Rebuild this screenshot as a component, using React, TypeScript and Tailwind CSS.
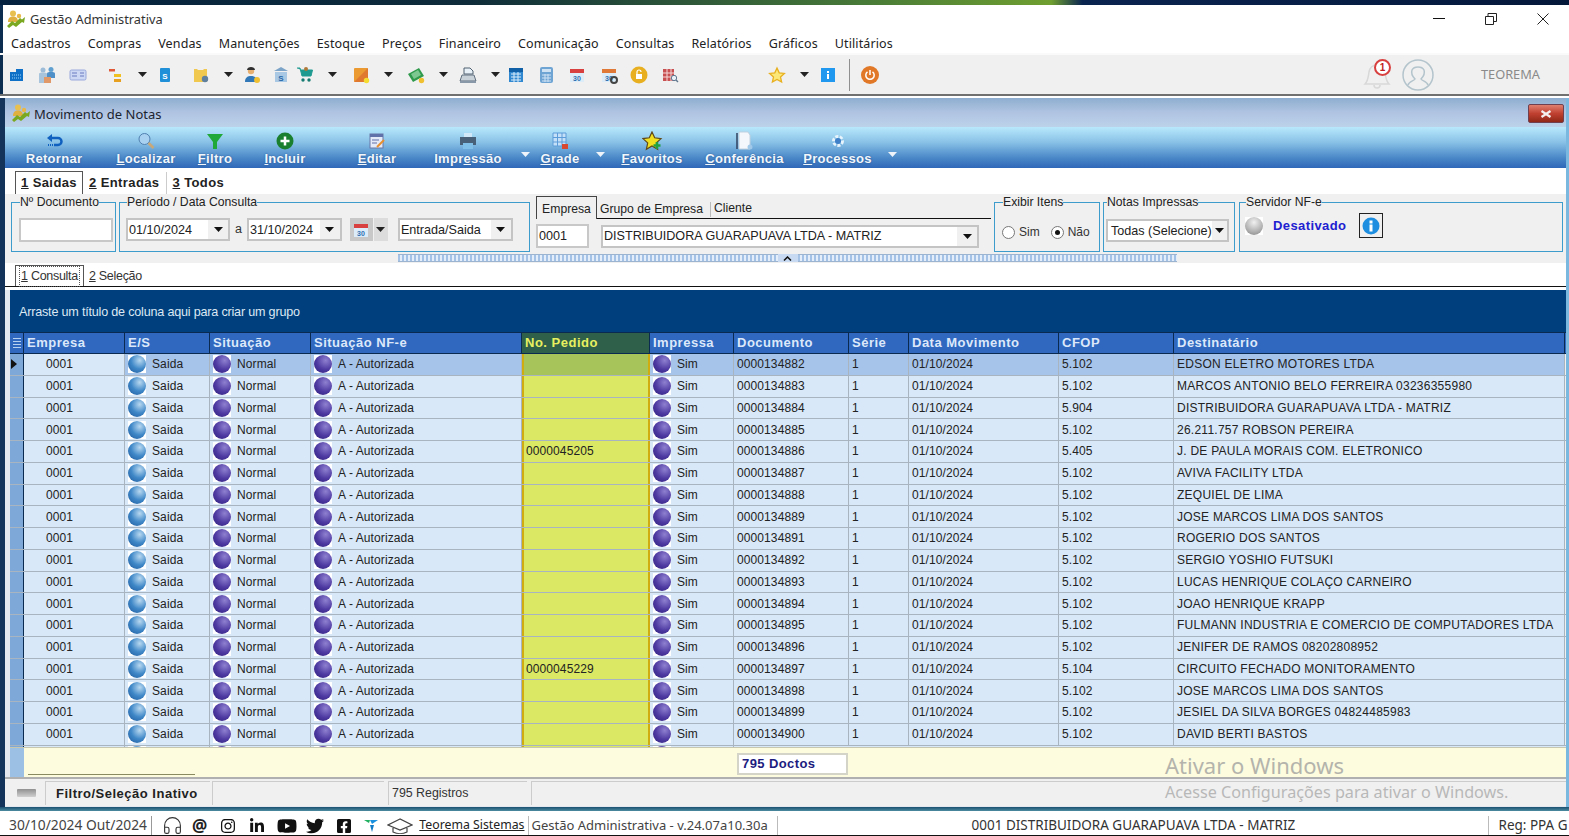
import type { ReactNode } from "react";
import { FaFacebookSquare, FaInstagram, FaLinkedinIn, FaTwitter, FaYoutube } from "react-icons/fa";
import { Headphones } from "lucide-react";

const menus = ["Cadastros", "Compras", "Vendas", "Manutenções", "Estoque", "Preços", "Financeiro", "Comunicação", "Consultas", "Relatórios", "Gráficos", "Utilitários"];

const columns = [
  { title: "Empresa", w: "w-[101px]" },
  { title: "E/S", w: "w-[85px]" },
  { title: "Situação", w: "w-[101px]" },
  { title: "Situação NF-e", w: "w-[211px]" },
  { title: "No. Pedido", w: "w-[128px]" },
  { title: "Impressa", w: "w-[84px]" },
  { title: "Documento", w: "w-[115px]" },
  { title: "Série", w: "w-[60px]" },
  { title: "Data Movimento", w: "w-[150px]" },
  { title: "CFOP", w: "w-[115px]" },
  { title: "Destinatário", w: "w-[391px]" },
];

const rows = [
  ["", "0000134882", "5.102", "EDSON ELETRO MOTORES LTDA"],
  ["", "0000134883", "5.102", "MARCOS ANTONIO BELO FERREIRA 03236355980"],
  ["", "0000134884", "5.904", "DISTRIBUIDORA GUARAPUAVA LTDA - MATRIZ"],
  ["", "0000134885", "5.102", "26.211.757 ROBSON PEREIRA"],
  ["0000045205", "0000134886", "5.405", "J. DE PAULA MORAIS COM. ELETRONICO"],
  ["", "0000134887", "5.102", "AVIVA FACILITY LTDA"],
  ["", "0000134888", "5.102", "ZEQUIEL DE LIMA"],
  ["", "0000134889", "5.102", "JOSE MARCOS LIMA DOS SANTOS"],
  ["", "0000134891", "5.102", "ROGERIO DOS SANTOS"],
  ["", "0000134892", "5.102", "SERGIO YOSHIO FUTSUKI"],
  ["", "0000134893", "5.102", "LUCAS HENRIQUE COLAÇO CARNEIRO"],
  ["", "0000134894", "5.102", "JOAO HENRIQUE KRAPP"],
  ["", "0000134895", "5.102", "FULMANN INDUSTRIA E COMERCIO DE COMPUTADORES LTDA"],
  ["", "0000134896", "5.102", "JENIFER DE RAMOS 08202808952"],
  ["0000045229", "0000134897", "5.104", "CIRCUITO FECHADO MONITORAMENTO"],
  ["", "0000134898", "5.102", "JOSE MARCOS LIMA DOS SANTOS"],
  ["", "0000134899", "5.102", "JESIEL DA SILVA BORGES 04824485983"],
  ["", "0000134900", "5.102", "DAVID BERTI BASTOS"],
];

function AppIcon() {
  return (
    <svg width="20" height="18" viewBox="0 0 20 18">
      <circle cx="7" cy="3.500" r="3" fill="#e8c050" />
      <path d="M2 12c0-4 2-5.500 5-5.500s5 1.500 5 5.500z" fill="#e0b040" />
      <circle cx="13" cy="6" r="2.200" fill="#e8b848" />
      <path d="M1 16l5-5 3 2 5-5 2 1.500 3-2.500-1 6-2-1-6 5-3-2-4 3z" fill="#7aa820" />
    </svg>
  );
}

function Caret({ color = "#222" }: { color?: string }) {
  return (
    <svg width="9" height="5" viewBox="0 0 9 5">
      <path d="M0 0h9L4.500 5z" fill={color} />
    </svg>
  );
}

function Ico({ children }: { children: ReactNode }) {
  return (
    <svg width="18" height="18" viewBox="0 0 18 18">
      {children}
    </svg>
  );
}

const Cal = ({ top = "#d84040", gear = false }: { top?: string; gear?: boolean }) => (
  <Ico>
    <rect x="2" y="3" width="14" height="13" fill="#dcecf8" />
    <rect x="2" y="3" width="14" height="4" fill={top} />
    <text x="9" y="14.500" fontSize="7" fontWeight="700" textAnchor="middle" fill="#3070b0" fontFamily="Liberation Sans">30</text>
    {gear && <circle cx="14" cy="14" r="3" fill="none" stroke="#444" strokeWidth="2" />}
  </Ico>
);

const toolIcons: { w: string; icon: ReactNode; caret?: boolean }[] = [
  { w: "w-[30px]", icon: <Ico><path d="M2 6h6V3h7v12H2z" fill="#0f70c8" /><path d="M4 9h10M4 12h10" stroke="#9cd0f4" strokeWidth="1" strokeDasharray="1 1" /></Ico> },
  { w: "w-[31px]", icon: <Ico><circle cx="5" cy="4" r="2.500" fill="#9cbcd8" /><circle cx="13" cy="3.500" r="2.500" fill="#60a0d0" /><path d="M1 17V8c0-1 1-1.500 4-1.500S9 7 9 8v9z" fill="#a8c4dc" /><path d="M9 12V7.500c0-1 1-1.500 4-1.500s4 .5 4 1.500V12z" fill="#5090c8" /><rect x="6" y="11" width="7" height="6" fill="#e09868" /></Ico> },
  { w: "w-[37px]", icon: <Ico><rect x="1" y="4" width="16" height="10" rx="1.500" fill="#ccd8f4" stroke="#98a8dc" /><path d="M3 7h5M3 10h5M11 7h4M11 10h4" stroke="#6878c0" /></Ico> },
  { w: "w-[50px]", caret: true, icon: <Ico><path d="M3 3h6v2.500H3z" fill="#e05838" /><path d="M8 8h7v3H8z" fill="#f0c020" /><path d="M8 13h7v3H8z" fill="#e8a020" /></Ico> },
  { w: "w-[36px]", icon: <Ico><rect x="4" y="2" width="10" height="14" rx="1" fill="#2090d8" /><text x="9" y="12.500" fontSize="8" fontWeight="700" textAnchor="middle" fill="#fff" fontFamily="Liberation Sans">S</text></Ico> },
  { w: "w-[51px]", caret: true, icon: <Ico><path d="M2 3h3l1 1h5l1-1h3v13H2z" fill="#f0c850" /><circle cx="13" cy="13" r="3.200" fill="#6080a0" /></Ico> },
  { w: "w-[29px]", icon: <Ico><circle cx="8" cy="5" r="3.200" fill="#e8b070" /><path d="M4 4c0-4 8-4 8 0z" fill="#303030" /><path d="M2 16c0-5 3-6 6-6s6 1 6 6z" fill="#3078b8" /><circle cx="14" cy="14" r="3" fill="#f0c030" /></Ico> },
  { w: "w-[24px]", icon: <Ico><path d="M9 1l7 4H2z" fill="#7ca4c8" /><rect x="3" y="6" width="12" height="10" fill="#a8c8e4" /><text x="9" y="14.500" fontSize="8" fontWeight="700" textAnchor="middle" fill="#2868a8" fontFamily="Liberation Sans">S</text></Ico> },
  { w: "w-[56px]", caret: true, icon: <Ico><path d="M1 2h3l2 8h9l1.500-6H5" fill="#1f9a90" stroke="#1f9a90" /><circle cx="7" cy="14" r="1.700" fill="#167a72" /><circle cx="13" cy="14" r="1.700" fill="#167a72" /><circle cx="10" cy="3" r="2" fill="#b07838" /></Ico> },
  { w: "w-[55px]", caret: true, icon: <Ico><rect x="2" y="2" width="14" height="14" rx="1" fill="#ea9a30" /><path d="M2 16L16 2v14z" fill="#e07830" /><circle cx="14.500" cy="14.500" r="2.700" fill="#f4dc30" /></Ico> },
  { w: "w-[52px]", caret: true, icon: <Ico><path d="M1 8l11-6 5 8-11 6z" fill="#2f9a4c" /><path d="M4 8l7-4 3 5-7 4z" fill="#7cc890" /><circle cx="14.500" cy="14.500" r="2.700" fill="#f0c030" /></Ico> },
  { w: "w-[48px]", caret: true, icon: <Ico><path d="M5 8V2h6l3 3v3z" fill="#e8f0f8" stroke="#506070" /><path d="M3 9h12l2 6H1z" fill="#c8d0d8" stroke="#607080" /><rect x="1" y="15" width="16" height="2" fill="#8898a8" /></Ico> },
  { w: "w-[30px]", icon: <Ico><rect x="2" y="2" width="14" height="14" fill="#3088d0" /><rect x="2" y="2" width="14" height="4" fill="#1060a8" /><path d="M4 8h10M4 11h10M4 14h10M7 6v10M11 6v10" stroke="#d8ecfa" /></Ico> },
  { w: "w-[31px]", icon: <Ico><rect x="3" y="1" width="13" height="16" rx="2" fill="#6ea4d4" /><rect x="5" y="3" width="9" height="3" fill="#cfe2f3" /><path d="M5 9h9M5 12h9M5 15h9M8 8v8M11 8v8" stroke="#cfe2f3" /></Ico> },
  { w: "w-[32px]", icon: <Cal /> },
  { w: "w-[30px]", icon: <Cal top="#e07838" gear /> },
  { w: "w-[31px]", icon: <Ico><circle cx="9" cy="9" r="8.500" fill="#e8b020" /><rect x="6" y="8" width="6" height="5" fill="#fff" /><path d="M7 8V6a2 2 0 0 1 4 0" fill="none" stroke="#fff" strokeWidth="1.200" /></Ico> },
  { w: "w-[107px]", icon: <Ico><rect x="2" y="3" width="11" height="12" fill="#c85050" /><path d="M2 7h11M2 11h11M6 3v12M10 3v12" stroke="#f4d8d8" /><circle cx="13" cy="12" r="2.700" fill="#e8f0f8" stroke="#607890" /><path d="M15 14l2 2" stroke="#607890" strokeWidth="1.500" /></Ico> },
  { w: "w-[51px]", caret: true, icon: <svg width="18" height="18" viewBox="0 0 18 18"><path d="M9 2l2.200 4.800 5.200.6-3.900 3.500 1.100 5.100L9 13.400 4.400 16l1.100-5.100-3.900-3.500 5.200-.6z" fill="#fbe878" stroke="#e8b020" strokeWidth="1.300" /></svg> },
  { w: "w-[30px]", icon: <Ico><rect x="2" y="2" width="14" height="14" fill="#2098f0" /><rect x="8" y="5" width="2" height="2" fill="#fff" /><rect x="8" y="8" width="2" height="5" fill="#fff" /></Ico> },
];

const actions: { label: string; u: number; w: string; icon: ReactNode; caret?: string }[] = [
  { label: "Retornar", u: -1, w: "w-[92px]", icon: <Ico><path d="M5 6h8a3 3 0 0 1 0 7H9" fill="none" stroke="#1060c0" strokeWidth="2.500" /><path d="M7 2L2 6l5 4z" fill="#1060c0" /><path d="M3 13h5" stroke="#1060c0" strokeDasharray="1 1" strokeWidth="2" /></Ico> },
  { label: "Localizar", u: 0, w: "w-[92px]", icon: <Ico><circle cx="7.500" cy="7" r="5.500" fill="#a8d0f0" stroke="#5080b0" /><path d="M11.500 11l5 5" stroke="#c8a878" strokeWidth="2.500" /></Ico> },
  { label: "Filtro", u: 0, w: "w-[46px]", icon: <Ico><path d="M1 2h16l-6 8v7H7v-7z" fill="#20a838" /></Ico> },
  { label: "Incluir", u: 0, w: "w-[94px]", icon: <Ico><circle cx="9" cy="9" r="8.500" fill="#1a8030" /><path d="M9 4.500v9M4.500 9h9" stroke="#fff" strokeWidth="2.500" /></Ico> },
  { label: "Editar", u: 0, w: "w-[90px]", icon: <Ico><rect x="2" y="2" width="13" height="14" fill="#e4eaf8" stroke="#6878a8" /><rect x="2" y="2" width="13" height="3" fill="#6070a8" /><path d="M4 8h7M4 11h5" stroke="#6070a8" /><path d="M9 15l7-7" stroke="#e89030" strokeWidth="2" /></Ico> },
  { label: "Impressão", u: 4, w: "w-[92px]", caret: "right-[-16px]", icon: <Ico><rect x="5" y="1" width="8" height="5" fill="#d0e8f8" /><rect x="1" y="5" width="16" height="8" fill="#486078" /><rect x="4" y="11" width="10" height="6" fill="#80c0e8" /></Ico> },
  { label: "Grade", u: 0, w: "w-[92px]", caret: "right-[1px]", icon: <Ico><rect x="2" y="1" width="13" height="13" fill="#c4e0f8" /><path d="M2 1h13v13H2zM6.500 1v13M11 1v13M2 5.500h13M2 10h13" fill="none" stroke="#5c9cd8" /><rect x="11" y="12" width="6" height="5" fill="#d84830" /></Ico> },
  { label: "Favoritos", u: 0, w: "w-[92px]", icon: <svg width="21" height="20" viewBox="0 0 21 20"><path d="M10 1l2.700 5.800 6.300.8-4.700 4.300 1.300 6.300L10 15l-5.600 3.200 1.300-6.300L1 7.600l6.300-.8z" fill="#f0e020" stroke="#604818" strokeWidth="1.200" /><path d="M15 11v7M11.500 14.500h7" stroke="#20a040" strokeWidth="2.500" /></svg> },
  { label: "Conferência", u: 0, w: "w-[93px]", icon: <svg width="18" height="20" viewBox="0 0 18 20"><path d="M3 1h9l2 3v14H3z" fill="#f4f8fc" stroke="#c0d0e0" /><path d="M1 2v16" stroke="#304060" strokeWidth="1.500" /><circle cx="14" cy="16" r="2.500" fill="#a0c8e8" /></svg> },
  { label: "Processos", u: 0, w: "w-[93px]", caret: "right-[-13px]", icon: <Ico><circle cx="9" cy="9" r="4.500" fill="none" stroke="#e8f4fc" strokeWidth="3" strokeDasharray="3 1.500" /><circle cx="9" cy="9" r="3" fill="#4080c8" /></Ico> },
];

function Legend({ text }: { text: string }) {
  return <legend className="ml-[1px] text-[12.200px] leading-[14px] text-[#222]">{text}</legend>;
}

function Sphere({ kind }: { kind: "blue" | "purple" | "gray" }) {
  const cls =
    kind === "blue"
      ? "bg-[radial-gradient(circle_at_65%_30%,#b8d8f0,#3f88c8_50%,#1f5a9c)]"
      : kind === "purple"
        ? "bg-[radial-gradient(circle_at_65%_30%,#8f80d0,#4c38a0_55%,#30207c)]"
        : "bg-[radial-gradient(circle_at_50%_30%,#f0f0f0,#b0b0b0_60%,#808080)]";
  return (
    <span className="inline-flex h-[18px] w-[18px] shrink-0 bg-white">
      <span className={`h-[18px] w-[18px] rounded-full ${cls}`} />
    </span>
  );
}

function Dropdown({ text, w, small }: { text: string; w: string; small?: boolean }) {
  return (
    <div className={`flex h-[23px] items-center justify-between border-2 border-[#c4c4c4] bg-white pl-[1px] ${w}`}>
      <span className="whitespace-nowrap pt-[1px] text-[12.600px] text-[#222]">{text}</span>
      <span className={`flex h-full items-center justify-center bg-[#f0f0f0] ${small ? "w-[17px]" : "w-[20px]"}`}>
        <Caret color="#111" />
      </span>
    </div>
  );
}

function Radio({ on, label }: { on: boolean; label: string }) {
  return (
    <span className="flex items-center gap-[4px] text-[12px] text-[#333]">
      <span className="flex h-[13px] w-[13px] items-center justify-center rounded-full border border-[#777] bg-white">
        {on && <span className="h-[5px] w-[5px] rounded-full bg-[#111]" />}
      </span>
      {label}
    </span>
  );
}

function Splitter() {
  return <div className="h-[8px] flex-1 border-y border-[#9cb4d0] bg-[repeating-linear-gradient(90deg,#a4c2e6_0,#a4c2e6_2px,#e4eefa_2px,#e4eefa_4px)]" />;
}

export default function App() {
  return (
    <div className="relative flex h-[836px] w-[1569px] flex-col overflow-hidden bg-white font-['Liberation_Sans',sans-serif]">
      <div className="h-[5px] shrink-0 bg-[linear-gradient(90deg,#04213f_0%,#0e2c3a_30%,#487a38_55%,#6f9f30_67%,#0a2450_69%,#04183a_100%)]" />

      <div className="flex h-[27px] shrink-0 items-center border-l-[3px] border-[#0c2c50] pl-[3px] font-['Noto_Sans',sans-serif]">
        <AppIcon />
        <span className="ml-[4px] mt-[3px] text-[12.800px] text-[#333]">Gestão Administrativa</span>
        <div className="ml-auto flex items-center text-[#222]">
          <span className="mr-[40px] h-[1px] w-[12px] bg-[#111]" />
          <svg width="12" height="12" viewBox="0 0 12 12" className="mr-[40px]">
            <path d="M.5 3.500h8v8h-8zM3 3.500V.5h8.500v8h-3" fill="none" stroke="#222" />
          </svg>
          <svg width="12" height="12" viewBox="0 0 12 12" className="mr-[20px]">
            <path d="M.5.5l11 11M11.500.5l-11 11" stroke="#222" />
          </svg>
        </div>
      </div>

      <div className="flex h-[21px] shrink-0 items-center gap-[17px] border-l-[3px] border-[#0c2c50] pl-[8px] pt-[3px] font-['Noto_Sans',sans-serif] text-[12.500px] tracking-[0.12px] text-[#222]">
        {menus.map((m) => (
          <span key={m}>{m}</span>
        ))}
      </div>
      <div className="h-[2px] shrink-0 bg-[#fafafa]" />

      <div className="flex h-[39px] shrink-0 items-center border-l-[3px] border-[#0c2c50] bg-[#f0f0f0] pl-[5px]">
        {toolIcons.map((t, i) => (
          <div key={i} className={`flex shrink-0 items-center ${t.w}`}>
            {t.icon}
            {t.caret && (
              <span className="ml-[14px] flex">
                <Caret />
              </span>
            )}
          </div>
        ))}
        <div className="h-[32px] w-[1px] bg-[#909090]" />
        <span className="ml-[11px] flex h-[18px] w-[18px] items-center justify-center rounded-full bg-[#e07828]">
          <svg width="12" height="12" viewBox="0 0 12 12">
            <path d="M3.500 2.800a4.200 4.200 0 1 0 5 0M6 1v5" fill="none" stroke="#fff" strokeWidth="1.500" />
          </svg>
        </span>
        <div className="ml-auto flex items-center text-[#8a8a8a]">
          <span className="relative mr-[8px] h-[32px] w-[32px]">
            <svg width="30" height="32" viewBox="0 0 30 32" className="absolute left-0 top-0">
              <path d="M3 25c3-3 3-6 4-12 1-5 4-7 8-7s7 2 8 7c1 6 1 9 4 12z" fill="none" stroke="#d8d8d8" strokeWidth="1.500" />
              <path d="M12 26a3 3 0 0 0 6 0" fill="none" stroke="#d8d8d8" strokeWidth="1.500" />
            </svg>
            <span className="absolute left-[12px] top-0 flex h-[17px] w-[17px] items-center justify-center rounded-full border-2 border-[#d84040] bg-white text-[10px] font-bold text-[#c02020]">1</span>
          </span>
          <svg width="32" height="32" viewBox="0 0 32 32">
            <circle cx="16" cy="16" r="15" fill="none" stroke="#b4c4cc" strokeWidth="1.500" />
            <path d="M6 26c1-4 6-4 7-6-3-3-4-6-3-9 1-2 3-3 6-3s5 1 6 3c1 3 0 6-3 9 1 2 6 2 7 6" fill="none" stroke="#b4c4cc" strokeWidth="1.500" />
          </svg>
          <span className="ml-[47px] mr-[29px] font-['Noto_Sans',sans-serif] text-[12.800px]">TEOREMA</span>
        </div>
      </div>
      <div className="h-[4px] shrink-0 border-t-2 border-[#707070] bg-white" />

      <div className="flex min-h-0 flex-1 flex-col border-l-[5px] border-r-[3px] border-l-[#13335a] border-r-[#7ab8e0] bg-[#e4e8ee]">
        <div className="flex h-[29px] shrink-0 items-center bg-[linear-gradient(180deg,#8eaecf,#b0c4e2_50%,#bcd2ea)] pl-[6px] font-['Noto_Sans',sans-serif]">
          <AppIcon />
          <span className="ml-[3px] mt-[4px] text-[13px] text-[#1c2430]">Movimento de Notas</span>
          <span className="ml-auto mr-[2px] mt-[2px] flex h-[19px] w-[36px] items-center justify-center rounded-[2px] border border-[#704050] bg-[linear-gradient(180deg,#e08070,#c04030_50%,#902818)]">
            <svg width="12" height="8" viewBox="0 0 12 8">
              <path d="M1.500 1l9 6M10.500 1l-9 6" stroke="#f4f0f0" strokeWidth="2.200" />
            </svg>
          </span>
        </div>

        <div className="flex h-[41px] shrink-0 items-start bg-[linear-gradient(180deg,#b8e8fc_0%,#8cc4e8_35%,#4a88c8_75%,#3068b8_100%)] pl-[3px]">
          {actions.map((a) => (
            <div key={a.label} className={`relative flex h-full shrink-0 flex-col items-center ${a.w}`}>
              <div className="flex h-[24px] items-center pt-[3px]">{a.icon}</div>
              <span className="whitespace-nowrap text-[13px] font-bold leading-[16px] tracking-[0.3px] text-[#f2f7fc] [text-shadow:0_0_2px_#2a5a98]">
                {a.u >= 0 ? (
                  <>
                    {a.label.slice(0, a.u)}
                    <u>{a.label[a.u]}</u>
                    {a.label.slice(a.u + 1)}
                  </>
                ) : (
                  a.label
                )}
              </span>
              {a.caret && (
                <span className={`absolute top-[25px] flex ${a.caret}`}>
                  <Caret color="#eef4fa" />
                </span>
              )}
            </div>
          ))}
        </div>

        <div className="flex h-[26px] shrink-0 items-end bg-white pl-[10px] text-[13px] font-bold tracking-[0.4px] text-[#222]">
          <span className="flex h-[23px] w-[68px] items-center justify-center border-x border-t border-[#555]"><span><u>1</u> Saidas</span></span>
          <span className="ml-[6px] flex h-[22px] items-center border-r border-[#ccc] pr-[7px]"><span><u>2</u> Entradas</span></span>
          <span className="ml-[5px] flex h-[22px] items-center"><span><u>3</u> Todos</span></span>
        </div>

        <div className="flex h-[60px] shrink-0 gap-[3px] bg-[#f0f0f0] pl-[6px] pt-[1px]">
          <fieldset className="h-[57px] w-[105px] border border-[#3d9ccb] pl-[7px]">
            <Legend text="Nº Documento" />
            <div className="mt-[9px] h-[24px] w-[94px] border-2 border-[#c8c8c8] bg-white" />
          </fieldset>
          <fieldset className="h-[57px] w-[411px] border border-[#3d9ccb] pl-[6px]">
            <Legend text="Período / Data Consulta" />
            <div className="mt-[9px] flex items-center">
              <Dropdown text="01/10/2024" w="w-[104px]" />
              <span className="mx-[5px] text-[12.500px] text-[#333]">a</span>
              <Dropdown text="31/10/2024" w="w-[95px]" />
              <span className="ml-[8px] flex h-[23px] w-[23px] items-center justify-center bg-[#c8c8c8]"><Cal /></span>
              <span className="ml-[1px] flex h-[23px] w-[14px] items-center justify-center bg-[#dcdcdc]"><Caret /></span>
              <Dropdown text="Entrada/Saida" w="w-[115px] ml-[10px]" />
            </div>
          </fieldset>

          <div className="ml-[3px] w-[455px] pt-[1px]">
            <div className="flex h-[23px] items-end border-b border-[#111] text-[12.200px] text-[#222]">
              <span className="mb-[-1px] flex h-[23px] w-[61px] items-center justify-center border-x border-t border-[#444] bg-[#f0f0f0] pt-[3px]">Empresa</span>
              <span className="mb-[1px] ml-[3px] flex h-[15px] items-center border-r border-[#bbb] pr-[7px]">Grupo de Empresa</span>
              <span className="mb-[1px] ml-[3px]">Cliente</span>
            </div>
            <div className="mt-[5px] flex items-center">
              <div className="flex h-[24px] w-[53px] items-center border-2 border-[#c8c8c8] bg-white pl-[1px] text-[12.600px] text-[#222]">0001</div>
              <Dropdown text="DISTRIBUIDORA GUARAPUAVA LTDA - MATRIZ" w="w-[378px] ml-[12px]" />
            </div>
          </div>

          <fieldset className="h-[57px] w-[106px] border border-[#3d9ccb] pl-[7px]">
            <Legend text="Exibir Itens" />
            <div className="mt-[14px] flex items-center gap-[11px]">
              <Radio on={false} label="Sim" />
              <Radio on label="Não" />
            </div>
          </fieldset>
          <fieldset className="h-[57px] w-[132px] border border-[#3d9ccb] pl-[2px]">
            <Legend text="Notas Impressas" />
            <div className="mt-[10px]">
              <Dropdown text="Todas (Selecione)" w="w-[123px] pl-[3px]" small />
            </div>
          </fieldset>
          <fieldset className="ml-[1px] h-[57px] w-[324px] border border-[#3d9ccb] pl-[5px]">
            <Legend text="Servidor NF-e" />
            <div className="mt-[4px] flex items-center">
              <Sphere kind="gray" />
              <span className="ml-[10px] text-[13px] font-bold tracking-[0.4px] text-[#2020d0]">Desativado</span>
              <span className="ml-[13px] flex h-[25px] w-[24px] items-center justify-center border border-[#222]">
                <svg width="18" height="18" viewBox="0 0 18 18">
                  <circle cx="9" cy="9" r="8.500" fill="#1d8ee0" />
                  <rect x="7.500" y="3.500" width="3" height="3" fill="#fff" />
                  <rect x="7.500" y="7.500" width="3" height="7" fill="#fff" />
                </svg>
              </span>
            </div>
          </fieldset>
        </div>

        <div className="flex h-[9px] shrink-0 items-start bg-[#f0f0f0] pl-[393px]">
          <div className="flex w-[779px] items-center">
            <Splitter />
            <span className="flex h-[8px] w-[20px] items-center justify-center bg-[#c8daf2]">
              <svg width="9" height="5" viewBox="0 0 9 5"><path d="M1 4.500l3.500-3.500 3.500 3.500" fill="none" stroke="#111" strokeWidth="1.500" /></svg>
            </span>
            <Splitter />
          </div>
        </div>

        <div className="flex h-[24px] shrink-0 items-end border-b border-[#111] bg-white pl-[10px] text-[12.500px] tracking-[-0.3px] text-[#333]">
          <span className="flex h-[21px] w-[69px] items-center justify-center border-x border-t border-[#555] pt-[1px]">
            <span className="border border-dotted border-[#555] px-[1px]"><u>1</u> Consulta</span>
          </span>
          <span className="ml-[5px] flex h-[21px] items-center pt-[2px]"><span><u>2</u> Seleção</span></span>
        </div>
        <div className="h-[3px] shrink-0 bg-white" />

        <div className="ml-[5px] flex h-[42px] shrink-0 items-center bg-[#003f7d] pl-[9px] pt-[3px] text-[12.600px] tracking-[-0.2px] text-[#dce8f4]">
          Arraste um título de coluna aqui para criar um grupo
        </div>

        <div className="ml-[5px] flex h-[22px] shrink-0 border-y border-[#0a2a50] bg-[#3068c0]">
          <div className="flex w-[14px] shrink-0 items-center justify-center border-r border-[#0a2a50]">
            <span className="h-[11px] w-[8px] bg-[repeating-linear-gradient(180deg,#b8d0f0_0,#b8d0f0_1px,#3068c0_1px,#3068c0_3px)]" />
          </div>
          {columns.map((c, i) => (
            <div
              key={c.title}
              className={`flex shrink-0 items-center border-r border-[#0a2a50] pl-[3px] text-[13px] font-bold tracking-[0.5px] ${c.w} ${i === 4 ? "bg-[#2f604a] text-[#e8f060]" : "text-[#dce8fa]"}`}
            >
              {c.title}
            </div>
          ))}
        </div>

        <div className="ml-[5px] h-[393px] shrink-0 overflow-hidden bg-[#fdfce0]">
          {rows.map((r, i) => {
            const selected = i === 0;
            const rowBg = selected ? "bg-[#a6c4ea]" : "bg-[#d8e8f8]";
            const cell = "flex shrink-0 items-center border-r border-[#a8b4c0] pl-[3px]";
            return (
              <div key={i} className="flex h-[21.760px] border-b border-[#a8b4c0] bg-[#f0f0f0] text-[12px] tracking-[0.1px] text-[#222]">
                <div className="flex w-[14px] shrink-0 items-center border-r border-[#0a2a50] bg-[#7ea8d8]">
                  {selected && <svg width="8" height="10" viewBox="0 0 8 10"><path d="M1 0l6 5-6 5z" fill="#111" /></svg>}
                </div>
                <div className={`${cell} w-[101px] bg-[#d8e8f8] pl-[22px]`}>0001</div>
                <div className={`${cell} ${rowBg} w-[85px] gap-[6px]`}><Sphere kind="blue" />Saida</div>
                <div className={`${cell} ${rowBg} w-[101px] gap-[6px]`}><Sphere kind="purple" />Normal</div>
                <div className={`${cell} ${rowBg} w-[211px] gap-[6px]`}><Sphere kind="purple" />A - Autorizada</div>
                <div className={`flex w-[128px] shrink-0 items-center border-x-2 border-[#d0ac10] pl-[2px] ${selected ? "bg-[#a7c45a]" : "bg-[#dbe864]"}`}>{r[0]}</div>
                <div className={`${cell} ${rowBg} w-[84px] gap-[6px]`}><Sphere kind="purple" />Sim</div>
                <div className={`${cell} ${rowBg} w-[115px]`}>{r[1]}</div>
                <div className={`${cell} ${rowBg} w-[60px]`}>1</div>
                <div className={`${cell} ${rowBg} w-[150px]`}>01/10/2024</div>
                <div className={`${cell} ${rowBg} w-[115px]`}>{r[2]}</div>
                <div className={`${cell} ${rowBg} w-[391px] whitespace-nowrap tracking-[0.25px]`}>{r[3]}</div>
              </div>
            );
          })}
          {/* linha cortada no fim da grade: so as bolinhas aparecem */}
          <div className="flex h-[21.760px] bg-[#d8e8f8]">
            <div className="w-[14px] shrink-0 border-r border-[#0a2a50] bg-[#7ea8d8]" />
            <div className="w-[101px] shrink-0 border-r border-[#a8b4c0]" />
            <div className="w-[85px] shrink-0 border-r border-[#a8b4c0] pl-[3px]"><Sphere kind="blue" /></div>
            <div className="w-[101px] shrink-0 border-r border-[#a8b4c0] pl-[3px]"><Sphere kind="purple" /></div>
            <div className="w-[211px] shrink-0 border-r border-[#a8b4c0] pl-[3px]"><Sphere kind="purple" /></div>
            <div className="w-[128px] shrink-0 border-x-2 border-[#d0ac10] bg-[#dbe864]" />
            <div className="w-[84px] shrink-0 border-r border-[#a8b4c0] pl-[3px]"><Sphere kind="purple" /></div>
            <div className="flex-1" />
          </div>
        </div>

        <div className="relative ml-[5px] flex h-[30px] shrink-0 border-t border-[#c8c8b0] bg-[#fdfcdf]">
          <div className="w-[14px] bg-[#9cc0e4]" />
          <div className="absolute bottom-[2px] left-[18px] h-[1px] w-[167px] bg-[#8a8a60]" />
          <div className="ml-[713px] mt-[5px] flex h-[22px] w-[111px] items-center border-2 border-[#d4d4c8] bg-white pl-[3px] text-[13px] font-bold tracking-[0.4px] text-[#1c1c80]">795 Doctos</div>
        </div>

        <div className="flex h-[29px] shrink-0 gap-[2px] border-t-2 border-[#b0b0b0] bg-[#f0f0f0] pl-[4px] pt-[2px]">
          <div className="flex h-[24px] w-[34px] items-center justify-center">
            <span className="h-[8px] w-[19px] rounded-[1px] bg-[linear-gradient(180deg,#909090,#d0d0d0)]" />
          </div>
          <div className="flex h-[24px] w-[165px] items-center border-l border-t border-[#ccc] pl-[10px] text-[13px] font-bold tracking-[0.5px] text-[#222]">Filtro/Seleção Inativo</div>
          <div className="h-[24px] w-[172px] border-l border-t border-[#ccc]" />
          <div className="ml-[2px] flex h-[24px] w-[139px] items-center border-l border-t border-[#ccc] pl-[3px] text-[12.400px] text-[#333]">795 Registros</div>
          <div className="ml-[2px] h-[24px] flex-1 border-l border-t border-[#ccc]" />
        </div>
      </div>

      <div className="h-[4px] shrink-0 bg-[linear-gradient(180deg,#1a5070,#4c8ca0)]" />
      <div className="flex h-[25px] shrink-0 items-center overflow-hidden border-b border-[#111] pl-[9px] pt-[5px] font-['Noto_Sans',sans-serif] text-[#444]">
        <span className="w-[142px] shrink-0 whitespace-nowrap text-[13.800px]">30/10/2024 Out/2024</span>
        <span className="h-[20px] w-[1px] shrink-0 bg-[#999]" />
        <Headphones size={21} strokeWidth={1.3} className="ml-[10px] shrink-0 text-[#333]" />
        <span className="ml-[9px] text-[17px] font-bold text-[#222]">@</span>
        <FaInstagram size={16} className="ml-[13px] shrink-0 text-[#111]" />
        <FaLinkedinIn size={16} className="ml-[13px] shrink-0 text-[#111]" />
        <FaYoutube size={20} className="ml-[12px] shrink-0 text-[#111]" />
        <FaTwitter size={18} className="ml-[9px] shrink-0 text-[#111]" />
        <FaFacebookSquare size={16} className="ml-[12px] shrink-0 text-[#111]" />
        <svg width="16" height="14" viewBox="0 0 16 14" className="ml-[11px] shrink-0">
          <path d="M1 1h6L6 4z" fill="#20b060" />
          <path d="M7 1h8L9 5z" fill="#1890e0" />
          <path d="M7 6h4l-2 7z" fill="#107cc8" />
        </svg>
        <svg width="26" height="18" viewBox="0 0 26 18" className="ml-[8px] shrink-0">
          <path d="M13 2L1 8l12 5 12-5zM6 11v4c4 2 10 2 14 0v-4" fill="none" stroke="#444" strokeWidth="1.200" />
        </svg>
        <span className="ml-[6px] whitespace-nowrap text-[12.300px] text-[#222] underline">Teorema Sistemas</span>
        <span className="ml-[4px] h-[20px] w-[1px] shrink-0 bg-[#bbb]" />
        <span className="ml-[2px] w-[246px] shrink-0 whitespace-nowrap text-[13px]">Gestão Administrativa - v.24.07a10.30a</span>
        <span className="h-[20px] w-[1px] shrink-0 bg-[#bbb]" />
        <span className="ml-[193px] w-[517px] shrink-0 whitespace-nowrap text-[13.500px] text-[#333]">0001 DISTRIBUIDORA GUARAPUAVA LTDA - MATRIZ</span>
        <span className="h-[20px] w-[1px] shrink-0 bg-[#bbb]" />
        <span className="ml-[9px] whitespace-nowrap text-[13.500px] text-[#333]">Reg: PPA G</span>
      </div>

      <div className="pointer-events-none absolute left-[1165px] top-[751px] font-['Noto_Sans',sans-serif] text-[22px] leading-[28px] text-[#b4b4ac]">Ativar o Windows</div>
      <div className="pointer-events-none absolute left-[1165px] top-[782px] font-['Noto_Sans',sans-serif] text-[16.200px] leading-[20px] text-[#b8b8b8]">Acesse Configurações para ativar o Windows.</div>
    </div>
  );
}
